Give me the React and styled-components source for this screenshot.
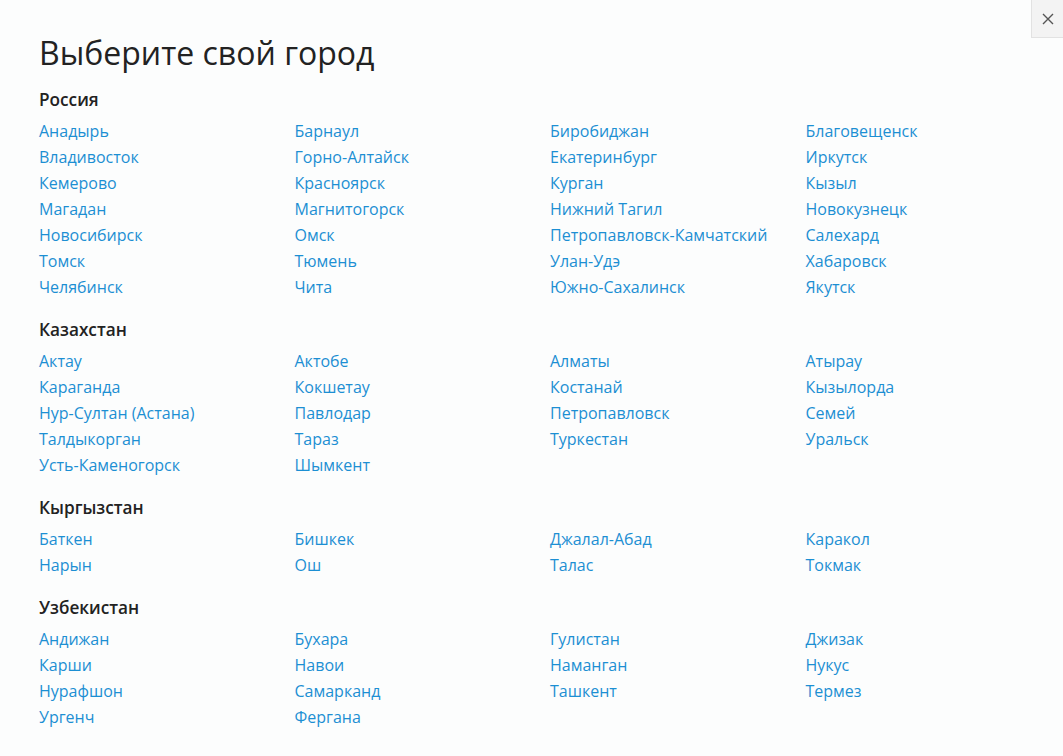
import styled, { createGlobalStyle } from 'styled-components'

const Global = createGlobalStyle`
  html, body {
    margin: 0;
    background: #fcfdfd;
  }
  body {
    font-family: "Open Sans", "Noto Sans", sans-serif;
  }
`

const Page = styled.div`
  position: relative;
  padding: 31px 2px 20px 39px;
  min-height: 756px;
  box-sizing: border-box;
`

const Close = styled.button`
  position: absolute;
  top: 0;
  right: 0;
  width: 32px;
  height: 38px;
  padding: 0;
  border: 1px solid #e2e2e2;
  border-top: none;
  border-right: none;
  background: #f3f3f3;
  display: flex;
  align-items: center;
  justify-content: center;
  cursor: pointer;
`

const Title = styled.h1`
  margin: 0 0 12px;
  font-size: 32px;
  line-height: 44px;
  font-weight: 400;
  color: #222;
`

const Section = styled.section`
  margin-bottom: 17px;
`

const Country = styled.h2`
  margin: 0 0 5px;
  font-size: 17.2px;
  line-height: 26px;
  font-weight: 600;
  color: #222;
`

const Grid = styled.div`
  display: grid;
  grid-template-columns: repeat(4, 1fr);
`

const City = styled.a`
  font-size: 16px;
  line-height: 26px;
  color: #1c8fd3;
  text-decoration: none;
  white-space: nowrap;
`

const data = [
  ['Россия', [
    'Анадырь', 'Барнаул', 'Биробиджан', 'Благовещенск',
    'Владивосток', 'Горно-Алтайск', 'Екатеринбург', 'Иркутск',
    'Кемерово', 'Красноярск', 'Курган', 'Кызыл',
    'Магадан', 'Магнитогорск', 'Нижний Тагил', 'Новокузнецк',
    'Новосибирск', 'Омск', 'Петропавловск-Камчатский', 'Салехард',
    'Томск', 'Тюмень', 'Улан-Удэ', 'Хабаровск',
    'Челябинск', 'Чита', 'Южно-Сахалинск', 'Якутск',
  ]],
  ['Казахстан', [
    'Актау', 'Актобе', 'Алматы', 'Атырау',
    'Караганда', 'Кокшетау', 'Костанай', 'Кызылорда',
    'Нур-Султан (Астана)', 'Павлодар', 'Петропавловск', 'Семей',
    'Талдыкорган', 'Тараз', 'Туркестан', 'Уральск',
    'Усть-Каменогорск', 'Шымкент',
  ]],
  ['Кыргызстан', [
    'Баткен', 'Бишкек', 'Джалал-Абад', 'Каракол',
    'Нарын', 'Ош', 'Талас', 'Токмак',
  ]],
  ['Узбекистан', [
    'Андижан', 'Бухара', 'Гулистан', 'Джизак',
    'Карши', 'Навои', 'Наманган', 'Нукус',
    'Нурафшон', 'Самарканд', 'Ташкент', 'Термез',
    'Ургенч', 'Фергана',
  ]],
]

function App() {
  return (
    <Page>
      <Global />
      <Close aria-label="Закрыть">
        <svg width="12" height="12" viewBox="0 0 12 12">
          <path d="M1 1L11 11M11 1L1 11" stroke="#555" strokeWidth="1.4" />
        </svg>
      </Close>
      <Title>Выберите свой город</Title>
      {data.map(([country, cities]) => (
        <Section key={country}>
          <Country>{country}</Country>
          <Grid>
            {cities.map((c) => (
              <City href="#" key={c}>{c}</City>
            ))}
          </Grid>
        </Section>
      ))}
    </Page>
  )
}

export default App
